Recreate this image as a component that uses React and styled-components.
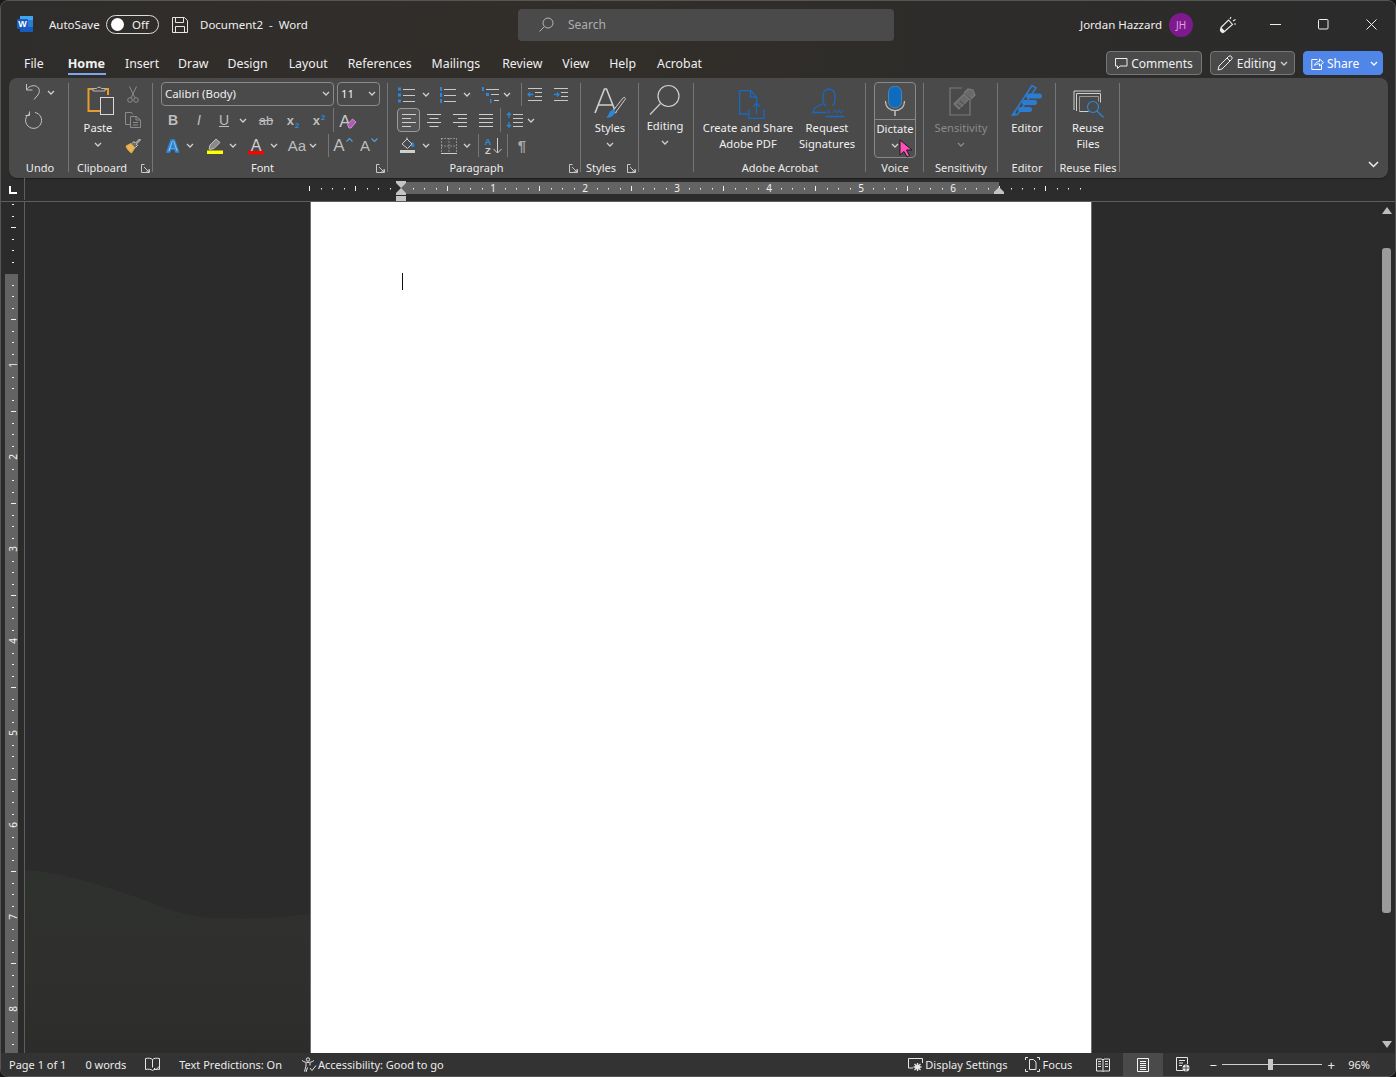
import React from "react";
import styled, { createGlobalStyle } from "styled-components";

const GlobalStyle = createGlobalStyle`
  html, body {
    margin: 0;
    padding: 0;
    background: #191919;
    overflow: hidden;
  }
  * { box-sizing: border-box; }
`;

const FONT = `"Noto Sans", "Open Sans", Arial, sans-serif`;

/* ---------- icons ---------- */
const Ico = ({ w = 16, h = 16, color = "#c9c9c9", sw = 1, children }) => (
  <svg width={w} height={h} viewBox={`0 0 ${w} ${h}`} fill="none" stroke={color} strokeWidth={sw}>
    {children}
  </svg>
);

const Chev = ({ color = "#d0d0d0" }) => (
  <svg width="8" height="5" viewBox="0 0 8 5" fill="none" stroke={color} strokeWidth="1.3">
    <path d="M1 1l3 3 3-3" />
  </svg>
);

const Launcher = () => (
  <Ico w={9} h={9} color="#c8c8c8">
    <path d="M3.5 .5H.5v8h8V5.5M3 3l5 5M8 5v3H5" />
  </Ico>
);

const WordLogo = () => (
  <svg width="17" height="17" viewBox="0 0 17 17">
    <rect x="3" y="0" width="13" height="16" rx="1" fill="#2b7cd3" />
    <rect x="3" y="0" width="13" height="4" fill="#41a5ee" />
    <rect x="3" y="11" width="13" height="5" fill="#185abd" />
    <rect x="0" y="3" width="11" height="10" rx="1" fill="#1a5cc0" />
    <text x="5.5" y="11" fontFamily="Liberation Sans" fontSize="9" fontWeight="700" fill="#fff" textAnchor="middle">W</text>
  </svg>
);

const SaveIcon = () => (
  <Ico w={16} h={16} color="#e6e6e6">
    <path d="M.5.5h12l3 3v12H.5zM3.5.5v5h8v-5M3.5 15.5v-6h9v6" />
  </Ico>
);

const SearchGlass = () => (
  <Ico w={15} h={15} color="#b4b4b4">
    <circle cx="9" cy="6" r="5" />
    <path d="M5.5 9.5L.5 14.5" />
  </Ico>
);

const Coauthor = () => (
  <svg width="18" height="18" viewBox="0 0 18 18" fill="none" stroke="#ededed" strokeWidth="1.1">
    <path d="M2 11.5L9.5 4l4 4.5L6 15l-2.5 1.5-2-2z" />
    <path d="M2.500 12.500l3 3L3.500 16.500l-2-2z" fill="#ededed" />
    <path d="M11 3l1-2M14 5l2.5-1.5M15 8h2" />
  </svg>
);

const Bubble = () => (
  <Ico w={13} h={13} color="#eee">
    <path d="M.5 1.5h11.5v7.5H5L2.5 11.5V9H.5z" />
  </Ico>
);

const PencilIcon = () => (
  <Ico w={16} h={16} color="#eee">
    <path d="M1 15l1-4L11.5 1.5a2 2 0 0 1 3 3L5 14zM10 3l3 3" />
  </Ico>
);

const ShareIcon = () => (
  <Ico w={13} h={13} color="#fff">
    <path d="M6.5 2.5H.8v10h9.7V8M3.5 8.5C4 5.5 6.5 4.5 8.5 4.5V2l4 3.5-4 3.5V6.8c-2 0-3.8.4-5 1.7z" />
  </Ico>
);

const UndoIcon = () => (
  <Ico w={16} h={18} color="#c4c4c4">
    <path d="M1.5 1v6h6M1.5 7C4 2.5 9.5 1.5 12.5 4c3 2.800 2 6.500-.5 9l-3 3.500" />
  </Ico>
);

const RedoIcon = () => (
  <Ico w={18} h={18} color="#c4c4c4">
    <path d="M5.500 2.500A8 8 0 1 0 11 1.500M5.500 .5v4H1.500" />
  </Ico>
);

const PasteIcon = () => (
  <svg width="28" height="32" viewBox="0 0 28 32" fill="none">
    <path d="M13 4H1.500v22H13" stroke="#e89c2f" strokeWidth="2" />
    <path d="M14 4h7v6" stroke="#e89c2f" strokeWidth="2" />
    <path d="M6 6V3.500h3.500a3 3 0 0 1 5 0H18V6z" stroke="#b9b9b9" fill="#4a4a4a" />
    <rect x="13.500" y="12.500" width="13" height="17" stroke="#d8d8d8" fill="#4a4a4a" />
  </svg>
);

const CutIcon = () => (
  <Ico w={12} h={17} color="#8c8c8c">
    <circle cx="3" cy="14" r="2.300" />
    <circle cx="9" cy="14" r="2.300" />
    <path d="M4 12L9.500.5M8 12L2.500.5" />
  </Ico>
);

const CopyIcon = () => (
  <Ico w={16} h={16} color="#8c8c8c">
    <path d="M5.500 12.500H.5v-12h6l1.500 2M5.500 4.500h6l4 3.500v7.500H5.500zM11 4.500V8h4.500M8 10.500h5M8 13h5" />
  </Ico>
);

const PainterIcon = () => (
  <svg width="16" height="16" viewBox="0 0 16 16" fill="none">
    <path d="M1 8l5-2.500 4 4L6.500 15C4 13.500 2 11 1 8z" fill="#e6b45c" stroke="#e8a93a" />
    <path d="M7 5.500l2 -2 1.500 1.500 4-4 1 1-4 4 1 1.500-2 2" stroke="#cfcfcf" fill="#6d6d6d" />
  </svg>
);

const LetterA = ({ color = "#bdbdbd", size = 16, weight = 400, children }) => (
  <ToolLetter $color={color} $size={size} $weight={weight}>{children || "A"}</ToolLetter>
);

const SizeCaret = ({ down }) => (
  <CaretMark width="7" height="4" viewBox="0 0 7 4" fill="none" stroke="#4a9fe0" strokeWidth="1.200">
    <path d={down ? "M.5 .5l3 3 3-3" : "M.5 3.500l3-3 3 3"} />
  </CaretMark>
);

const TextEffects = () => (
  <svg width="18" height="20" viewBox="0 0 18 20">
    <text x="9" y="16" textAnchor="middle" fontFamily="Liberation Sans" fontSize="17" fontWeight="700" fill="#e2edf6" stroke="#2b88d8" strokeWidth="1.500">A</text>
  </svg>
);

const Marker = () => (
  <svg width="16" height="16" viewBox="0 0 16 16" fill="none">
    <path d="M2 11l1-4 6-6 4 3.500-6 6-4 1z" fill="#8a8a8a" stroke="#bdbdbd" />
    <rect x="0" y="12.500" width="16" height="3.500" fill="#ffff00" />
  </svg>
);

const FontColorA = () => (
  <svg width="16" height="20" viewBox="0 0 16 20">
    <text x="8" y="14.500" textAnchor="middle" fontFamily="Liberation Sans" fontSize="16" fill="#cfcfcf">A</text>
    <rect x="0" y="15" width="16" height="3.500" fill="#ff0000" />
  </svg>
);

const ClearFormat = () => (
  <svg width="20" height="20" viewBox="0 0 20 20" fill="none">
    <text x="7" y="16.500" textAnchor="middle" fontFamily="Liberation Sans" fontSize="17" fill="#c8c8c8">A</text>
    <path d="M9.500 14.500l5-5.500 3.500 3-5 6h-2z" stroke="#d88ad8" fill="#a85fb0" />
  </svg>
);

const ListBars = ({ kind }) => {
  const marks = [2, 8, 14];
  return (
    <svg width="18" height="16" viewBox="0 0 18 16" fill="none">
      {marks.map((y) => (
        <g key={y}>
          {kind === "bullet" && <rect x="0" y={y - 1.500} width="3" height="3" fill="#2b88d8" />}
          {kind === "number" && <rect x="1" y={y - 2} width="2" height="4" fill="#2b88d8" />}
          <path d={`M5 ${y + 0.500}h12`} stroke="#c8c8c8" />
        </g>
      ))}
    </svg>
  );
};

const Multilevel = () => (
  <svg width="18" height="16" viewBox="0 0 18 16" fill="none">
    <rect x="0" y="0" width="2" height="4" fill="#2b88d8" />
    <rect x="4" y="6" width="3" height="3" fill="#2b88d8" />
    <rect x="8" y="12" width="1.500" height="4" fill="#2b88d8" />
    <path d="M4 2.500h13M9 7.500h8M12 13.500h5" stroke="#c8c8c8" />
  </svg>
);

const IndentIcon = ({ flip }) => (
  <svg width="16" height="14" viewBox="0 0 16 14" fill="none">
    <path d="M1 .5h14M8 4.500h7M8 8.500h7M1 12.500h14" stroke="#c8c8c8" />
    <path d={flip ? "M1 6.500h5M4 4.500l2 2-2 2" : "M6 6.500H1M3 4.500l-2 2 2 2"} stroke="#2b88d8" strokeWidth="1.300" />
  </svg>
);

const AlignIcon = ({ mode }) => {
  const rows = {
    left: ["M1 1.500h14", "M1 5.500h9", "M1 9.500h14", "M1 13.500h9"],
    center: ["M1 1.500h14", "M3.500 5.500h9", "M1 9.500h14", "M3.500 13.500h9"],
    right: ["M1 1.500h14", "M6 5.500h9", "M1 9.500h14", "M6 13.500h9"],
    justify: ["M1 1.500h14", "M1 5.500h14", "M1 9.500h14", "M1 13.500h14"],
  };
  return (
    <svg width="16" height="15" viewBox="0 0 16 15" fill="none" stroke="#cfcfcf">
      <path d={rows[mode].join("")} />
    </svg>
  );
};

const LineSpacing = () => (
  <svg width="18" height="16" viewBox="0 0 18 16" fill="none">
    <path d="M7 2.500h10M7 6.500h10M7 10.500h10M7 14.500h10" stroke="#c8c8c8" />
    <path d="M3 1v5M1 3l2-2 2 2M3 10v5M1 13l2 2 2-2" stroke="#2b88d8" strokeWidth="1.300" />
  </svg>
);

const Shading = () => (
  <svg width="16" height="17" viewBox="0 0 16 17" fill="none">
    <path d="M2 7l5-5 5 5-4.500 4.500z" stroke="#d0d0d0" />
    <path d="M7 2V.5" stroke="#d0d0d0" />
    <path d="M12.500 5c1 1.500 1.500 2.500 1.500 3.500a1 1 0 0 1-2.500 0" fill="#2b88d8" stroke="#2b88d8" />
    <rect x="0" y="13" width="15" height="3" fill="#cfcfcf" />
  </svg>
);

const Borders = () => (
  <svg width="16" height="16" viewBox="0 0 16 16" fill="none" stroke="#cfcfcf" strokeDasharray="1 2">
    <path d="M.5 .5h15M.5 .5v15M15.500 .5v15M8 .5v15M.5 8h15" />
    <path d="M0 15.500h16" strokeDasharray="none" />
  </svg>
);

const SortIcon = () => (
  <svg width="20" height="20" viewBox="0 0 20 20" fill="none">
    <text x="5" y="9" textAnchor="middle" fontFamily="Liberation Sans" fontSize="9.500" fontWeight="700" fill="#2b88d8">A</text>
    <text x="5" y="18" textAnchor="middle" fontFamily="Liberation Sans" fontSize="9.500" fontWeight="700" fill="#cfcfcf">Z</text>
    <path d="M14.500 2v15M10.500 13l4 4 4-4" stroke="#cfcfcf" />
  </svg>
);

const StylesIcon = () => (
  <svg width="32" height="30" viewBox="0 0 32 30" fill="none">
    <path d="M1 25L10.500 1h2L22 25M4.500 17h14" stroke="#cfcfcf" strokeWidth="1.600" />
    <path d="M18 24l11-14c1.500-1.500 3 0 2 1.500L22 24" stroke="#cfcfcf" fill="#4a4a4a" />
    <path d="M12 29.500c3 .5 6-.5 7.500-2.500 1.500-1.500 2.500-3 1.500-4.500-1.500-1-4-.5-5 1-1 1.500-1 4-4 6z" fill="#2b88d8" />
  </svg>
);

const BigGlass = () => (
  <Ico w={32} h={32} color="#cfcfcf" sw={1.200}>
    <circle cx="19.500" cy="12" r="10.500" />
    <path d="M11.500 19.500L1 30.500" />
  </Ico>
);

const AdobeIcon = () => (
  <svg width="26" height="29" viewBox="0 0 26 29" fill="none" stroke="#1968c2" strokeWidth="1.300">
    <path d="M9 24H.7V.7h11l6 6.500v5M11.500.7v6.500h6.500" />
    <path d="M10 19v9.300h15V19M17.500 24V13M14 16.500l3.500-3.500 3.500 3.500" />
  </svg>
);

const SignIcon = () => (
  <svg width="32" height="30" viewBox="0 0 32 30" fill="none" stroke="#1968c2" strokeWidth="1.300">
    <path d="M14 18c-1.500-1-3-3-3-5.500V7a6 6 0 0 1 12 0v5.500c0 2.500-1 4-2.500 5" />
    <path d="M10.500 16C5 18 1 20 1 24.500h13" />
    <path d="M15 22l3 3M18 22l-3 3M21 25l2-3 2 3 2-3 2 3 2-3" strokeWidth="1" />
    <path d="M14 28.500h18" />
  </svg>
);

const MicIcon = () => (
  <svg width="22" height="30" viewBox="0 0 22 30" fill="none">
    <rect x="4.500" y="0" width="13" height="22" rx="6.500" fill="#0f6cbd" stroke="#5e9fd8" strokeWidth=".6" />
    <path d="M1.500 15c0 6 4 9.500 9.500 9.500s9.500-3.500 9.500-9.500" stroke="#bdbdbd" strokeWidth="1.200" />
    <path d="M11 24.500V30" stroke="#bdbdbd" strokeWidth="1.600" />
  </svg>
);

const PinkCursor = () => (
  <svg width="14" height="19" viewBox="0 0 14 19">
    <path d="M1 1v15l4-3.500 3 5.500 2.500-1.500-3-5.500H13z" fill="#ff4fb8" stroke="#1d1d1d" strokeWidth="1" />
  </svg>
);

const SensitivityIcon = () => (
  <svg width="28" height="30" viewBox="0 0 28 30" fill="none" stroke="#7a7a7a">
    <path d="M13 2H1v27h20V13" strokeWidth="1.200" />
    <path d="M5 18L15 8l5 5-10 10zM15 7l4-4 5 1 2 5-4 4" fill="#6a6a6a" strokeWidth="1.200" />
    <path d="M8 18l6 5M11 15l6 5" stroke="#4a4a4a" />
  </svg>
);

const EditorIcon = () => (
  <svg width="32" height="33" viewBox="0 0 32 33" fill="none">
    <path d="M1.500 31L21 1.500l4 2.500L6.500 30.500z" stroke="#2b7cd3" strokeWidth="1.500" />
    <path d="M1 32l5-1.500L3 27z" fill="#2b7cd3" />
    <rect x="15" y="9.500" width="16" height="5" rx="2.500" fill="#2b7cd3" />
    <rect x="11" y="16" width="15" height="5" rx="2.500" fill="#2b7cd3" />
    <rect x="7" y="23" width="14" height="5" rx="2.500" fill="#2b7cd3" />
  </svg>
);

const ReuseIcon = () => (
  <svg width="32" height="28" viewBox="0 0 32 28" fill="none">
    <path d="M1 20V1h27" stroke="#cfcfcf" />
    <path d="M3.500 21V3.500h24v9" stroke="#cfcfcf" />
    <path d="M6.500 21.500V6.500h19v5" stroke="#9a9a9a" />
    <path d="M6.500 21.500h9" stroke="#cfcfcf" />
    <circle cx="20" cy="17" r="5.500" stroke="#2b88d8" strokeWidth="1.200" />
    <path d="M24 21l6.500 6.500" stroke="#2b88d8" strokeWidth="1.300" />
  </svg>
);

const BookCheck = () => (
  <Ico w={15} h={15} color="#e6e6e6">
    <path d="M7.500 2.500C6 1 3 1 .5 1.500v11C3 12 6 12 7.500 13.500 9 12 12 12 14.500 12.500v-11C12 1 9 1 7.500 2.500zM7.500 2.500v8M9 11l2 2 3-3.500" />
  </Ico>
);

const AccessIcon = () => (
  <Ico w={16} h={16} color="#e6e6e6">
    <circle cx="7" cy="2.500" r="1.700" />
    <path d="M1 3.500C3 5 5 5.500 7 5.500s4-.5 6-2M5 6v3L3.500 14.500M9 6v2.500M6.500 10.500L5 15M9 11l2 2.500 4-5" />
  </Ico>
);

const DisplayIcon = () => (
  <Ico w={15} h={14} color="#e6e6e6">
    <path d="M5 10H.5V.5h14V5" />
    <circle cx="9.500" cy="9" r="2" fill="#e6e6e6" />
    <path d="M9.500 5v8M5.500 9h8M6.500 6l6 6M12.500 6l-6 6" strokeWidth="1.300" />
  </Ico>
);

const FocusIcon = () => (
  <Ico w={15} h={15} color="#e6e6e6">
    <path d="M.5 3V.5H3M12 .5h2.500V3M14.500 12v2.500H12M3 14.500H.5V12" />
    <path d="M4.500 12.500V2.500H8.500l2.500 2.500v7.500z" />
  </Ico>
);

const ReadIcon = () => (
  <Ico w={14} h={14} color="#e6e6e6">
    <path d="M.5 1h5.500l1 1 1-1h5.500v12H8l-1 .5L6 13H.5zM7 2v11M2 3.500h3M2 6h3M2 8.500h3M9 3.500h3M9 6h3M9 8.500h3" />
  </Ico>
);

const PrintIcon = () => (
  <Ico w={12} h={14} color="#f4f4f4">
    <path d="M.5 .5h11v13H.5zM3 3.500h6M3 5.500h6M3 7.500h6M3 9.500h6M3 11.500h6" />
  </Ico>
);

const WebIcon = () => (
  <svg width="14" height="15" viewBox="0 0 14 15" fill="none" stroke="#e6e6e6">
    <path d="M7 13.500H.5V.5h11V7M3 3.500h6M3 6h4M3 8.500h3" />
    <circle cx="10" cy="11" r="3.500" fill="#e6e6e6" stroke="none" />
    <path d="M6.500 11h7M10 7.500v7" stroke="#333" strokeWidth=".8" />
  </svg>
);

/* ---------- rulers ---------- */
const HRuler = () => {
  const ticks = [];
  for (let i = 0; i <= 67; i++) {
    const x = 309 + i * 11.5;
    if (x > 1082) break;
    const rem = i % 8;
    if (rem === 0 && x > 320 && x < 1000) continue;
    if (rem === 0 || rem === 4) {
      ticks.push(<rect key={i} x={Math.round(x)} y={186} width={1} height={5} fill="#f2f2f2" />);
    } else {
      ticks.push(<rect key={i} x={Math.round(x)} y={188} width={1} height={1.500} fill="#f2f2f2" />);
    }
  }
  return (
    <svg width="1370" height="23" viewBox="25 178 1370 23">
      <rect x="401" y="182" width="598" height="12" fill="#636363" />
      {ticks}
      {[1, 2, 3, 4, 5, 6].map((n) => (
        <text key={n} x={401 + n * 92} y={192} textAnchor="middle" fontFamily="Noto Sans" fontSize="10" fill="#f2f2f2">{n}</text>
      ))}
      <path d="M396 181h10v2l-5 5-5-5zM396 195v-2l5-5 5 5v2z" fill="#c4c4c4" />
      <rect x="396" y="196" width="10" height="5" fill="#c4c4c4" />
      <path d="M994 194v-2l5-5 5 5v2z" fill="#c4c4c4" />
    </svg>
  );
};

const VRuler = () => {
  const ticks = [];
  for (let i = -6; i <= 68; i++) {
    const y = 273 + i * 11.5;
    if (y > 1050) break;
    const rem = ((i % 8) + 8) % 8;
    if (rem === 0) continue;
    if (rem === 4) ticks.push(<rect key={i} x={11} y={Math.round(y)} width={5} height={1} fill="#f2f2f2" />);
    else ticks.push(<rect key={i} x={12} y={Math.round(y)} width={2} height={1} fill="#f2f2f2" />);
  }
  return (
    <svg width="23" height="851" viewBox="1 202 23 851">
      <rect x="5" y="274" width="13" height="779" fill="#636363" />
      {ticks}
      {[1, 2, 3, 4, 5, 6, 7, 8].map((n) => (
        <text
          key={n}
          x={0}
          y={0}
          transform={`translate(16.500 ${273 + n * 92}) rotate(-90)`}
          textAnchor="middle"
          fontFamily="Noto Sans"
          fontSize="10"
          fill="#f2f2f2"
        >
          {n}
        </text>
      ))}
    </svg>
  );
};

/* ---------- layout ---------- */
const Window = styled.div`
  width: 1396px;
  height: 1077px;
  display: flex;
  flex-direction: column;
  border: 1px solid #555;
  border-radius: 8px;
  overflow: hidden;
  background: #2b2b2b;
  font-family: ${FONT};
  color: #f0f0f0;
`;

const Header = styled.div`
  background: linear-gradient(90deg, #2f2d2b 0%, #322e2a 45%, #2d2c2a 70%, #2b2b2b 100%);
`;

const TitleBar = styled.div`
  height: 47px;
  display: flex;
  align-items: center;
  font-size: 11.5px;
`;

const TitleLeft = styled.div`
  width: 517px;
  display: flex;
  align-items: center;
  padding-left: 16px;
`;

const AutoSave = styled.span`
  margin-left: 15px;
  width: 57px;
`;

const Toggle = styled.div`
  width: 53px;
  height: 19px;
  border: 1px solid #dcdcdc;
  border-radius: 10px;
  display: flex;
  align-items: center;
  padding-left: 4px;
  gap: 8px;
  font-size: 11.5px;
  &::before {
    content: "";
    width: 13px;
    height: 13px;
    border-radius: 50%;
    background: #fff;
  }
`;

const SaveSlot = styled.span`
  margin-left: 13px;
  display: flex;
`;

const DocTitle = styled.span`
  margin-left: 12px;
  white-space: pre;
`;

const SearchBox = styled.div`
  width: 376px;
  height: 32px;
  background: #4a4a4a;
  border-radius: 4px;
  display: flex;
  align-items: center;
  padding-left: 21px;
  gap: 14px;
  color: #aeaeae;
  font-size: 12px;
`;

const TitleRight = styled.div`
  flex: 1;
  display: flex;
  align-items: center;
  padding-left: 186px;
`;

const UserName = styled.span`
  width: 89px;
`;

const Avatar = styled.div`
  width: 24px;
  height: 24px;
  border-radius: 50%;
  background: #7e1a8e;
  color: #d9a6df;
  font-size: 10px;
  display: flex;
  align-items: center;
  justify-content: center;
`;

const WinButton = styled.span`
  width: 48px;
  display: flex;
  justify-content: center;
`;

const MinimizeButton = styled(WinButton)`
  margin-left: 14px;
`;

const CoauthorSlot = styled.span`
  margin-left: 26px;
  display: flex;
`;

const TabBar = styled.div`
  height: 30px;
  display: flex;
  align-items: center;
  padding: 0 12px 0 23px;
  font-size: 12.3px;
`;

const Tab = styled.span`
  margin-right: ${(p) => p.$mr || 20}px;
  position: relative;
  font-weight: ${(p) => (p.$active ? 700 : 400)};
  font-size: ${(p) => (p.$active ? "12.6px" : "inherit")};
  ${(p) =>
    p.$active &&
    `
    &::after {
      content: "";
      position: absolute;
      left: 0;
      right: -1px;
      bottom: -3px;
      height: 2px;
      background: #7aa7ee;
    }
  `}
`;

const HeaderActions = styled.div`
  margin-left: auto;
  display: flex;
  gap: 8px;
`;

const ActionButton = styled.div`
  width: ${(p) => p.$w}px;
  height: 24px;
  display: flex;
  align-items: center;
  justify-content: center;
  gap: ${(p) => p.$gap || 5}px;
  border-radius: 4px;
  border: 1px solid #777;
  background: #4a4a4a;
  font-size: 12px;
`;

const ShareButton = styled(ActionButton)`
  background: #4f86e8;
  border-color: #4f86e8;
  color: #fff;
  justify-content: flex-start;
  padding-left: 7px;
  position: relative;
  svg:last-child {
    position: absolute;
    right: 4px;
    top: 9px;
  }
`;

const Ribbon = styled.div`
  margin: 0 7px 0 8px;
  height: 100px;
  background: #4a4a4a;
  border-radius: 8px;
  display: flex;
  position: relative;
  font-size: 11.2px;
  box-shadow: 0 1px 1px #1f1f1f;
`;

const Group = styled.div`
  width: ${(p) => p.$w}px;
  position: relative;
  display: flex;
  flex-direction: column;
  padding-top: 4px;
  &::after {
    content: "";
    position: absolute;
    right: 0;
    top: 5px;
    bottom: 6px;
    width: 1px;
    background: #767676;
  }
`;

const GroupBody = styled.div`
  height: 76px;
  display: flex;
  flex-direction: ${(p) => (p.$col ? "column" : "row")};
  justify-content: ${(p) => p.$justify || "flex-start"};
  padding-left: ${(p) => p.$pl || 0}px;
`;

const GroupLabel = styled.div`
  height: 20px;
  line-height: 20px;
  text-align: center;
  padding-left: ${(p) => p.$pl || 0}px;
  padding-right: ${(p) => p.$pr || 0}px;
  font-size: 11px;
  color: #ececec;
  white-space: nowrap;
`;

const LauncherSlot = styled.span`
  position: absolute;
  right: 3px;
  bottom: 5px;
  display: flex;
`;

const Row = styled.div`
  display: flex;
  align-items: center;
  height: ${(p) => p.$h || 25}px;
`;

const Tool = styled.span`
  width: ${(p) => p.$w}px;
  margin-left: ${(p) => p.$ml || 0}px;
  height: 100%;
  flex: none;
  display: flex;
  align-items: center;
  justify-content: center;
  position: relative;
  svg {
    flex: none;
  }
  ${(p) =>
    p.$sep &&
    `
    &::before {
      content: "";
      position: absolute;
      left: 0;
      top: 1px;
      bottom: 1px;
      width: 1px;
      background: #767676;
    }
  `}
`;

const ActiveTool = styled(Tool)`
  height: 24px;
  border: 1px solid #9a9a9a;
  border-radius: 4px;
  background: #555;
`;

const ToolLetter = styled.span`
  font-family: "Liberation Sans", Arial, sans-serif;
  font-size: ${(p) => p.$size}px;
  font-weight: ${(p) => p.$weight};
  color: ${(p) => p.$color};
  line-height: 1;
  white-space: nowrap;
`;

const Sup = styled.span`
  font-size: 8px;
  font-weight: 700;
  color: #2b88d8;
  position: relative;
  top: ${(p) => p.$top}px;
  margin-left: 1px;
`;

const CaretMark = styled.svg`
  align-self: flex-start;
  margin: 5px 0 0 1px;
`;

const Select = styled.div`
  align-self: flex-start;
  height: 24px;
  width: ${(p) => p.$w}px;
  margin-left: ${(p) => p.$ml || 0}px;
  border: 1px solid #8a8a8a;
  border-radius: 4px;
  display: flex;
  align-items: center;
  justify-content: space-between;
  padding: 0 3px 2px;
  font-size: 11.4px;
`;

const BigTool = styled.div`
  width: ${(p) => p.$w}px;
  display: flex;
  flex-direction: column;
  align-items: center;
  text-align: center;
  line-height: 16px;
  color: ${(p) => (p.$muted ? "#8a8a8a" : "#f0f0f0")};
`;

const BigIcon = styled.div`
  height: ${(p) => p.$h || 38}px;
  padding-left: ${(p) => p.$dx || 0}px;
  padding-bottom: ${(p) => p.$pb || 0}px;
  display: flex;
  align-items: ${(p) => (p.$pb !== undefined ? "flex-end" : "center")};
  justify-content: center;
  flex: none;
`;

const ChevRow = styled.div`
  height: 16px;
  display: flex;
  align-items: center;
  justify-content: center;
`;

const DictateButton = styled.div`
  width: 42px;
  height: 76px;
  margin-left: 8px;
  border: 1px solid #8a8a8a;
  border-radius: 4px;
  background: #4f4f4f;
  display: flex;
  flex-direction: column;
  align-items: center;
  position: relative;
  line-height: 16px;
  flex: none;
`;

const DictateTop = styled.div`
  height: 37px;
  width: 100%;
  display: flex;
  justify-content: center;
  padding-top: 3px;
  margin-bottom: 1px;
  border-bottom: 1px solid #8a8a8a;
  flex: none;
`;

const CursorSlot = styled.span`
  position: absolute;
  left: 24px;
  top: 56px;
  display: flex;
`;

const CollapseSlot = styled.span`
  position: absolute;
  right: 9px;
  bottom: 10px;
  display: flex;
`;

const RulerRow = styled.div`
  height: 24px;
  flex: none;
  display: flex;
  background: #2c2c2c;
  border-bottom: 1px solid #5e5e5e;
`;

const RulerCorner = styled.div`
  width: 24px;
  height: 22px;
  flex: none;
  border-right: 1px solid #5e5e5e;
  position: relative;
  &::before {
    content: "";
    position: absolute;
    left: 8px;
    top: 8px;
    width: 6px;
    height: 6px;
    border-left: 2px solid #fff;
    border-bottom: 2px solid #fff;
  }
`;

const Main = styled.div`
  flex: 1;
  display: flex;
  min-height: 0;
`;

const VRulerSlot = styled.div`
  width: 24px;
  flex: none;
  border-right: 1px solid #5e5e5e;
  background: #2b2b2b;
`;

const Canvas = styled.div`
  flex: 1;
  display: flex;
  justify-content: center;
  padding-right: 2px;
  position: relative;
  background: #2b2b2b;
`;

const Wave = styled.svg`
  position: absolute;
  left: 0;
  top: 660px;
`;

const Page = styled.div`
  width: 782px;
  height: 100%;
  background: #fff;
  border-left: 1px solid #6e6e6e;
  border-right: 1px solid #6e6e6e;
  padding: 71px 0 0 91px;
  position: relative;
`;

const Caret = styled.div`
  width: 1px;
  height: 17px;
  background: #111;
`;

const ScrollBar = styled.div`
  width: 17px;
  flex: none;
  display: flex;
  flex-direction: column;
  align-items: center;
  background: #2a2a2a;
`;

const ScrollArrow = styled.div`
  height: 17px;
  flex: none;
  display: flex;
  align-items: center;
  justify-content: center;
`;

const Thumb = styled.div`
  width: 9px;
  height: 665px;
  margin-top: 29px;
  border-radius: 3px;
  background: #9b9b9b;
`;

const ScrollSpace = styled.div`
  flex: 1;
`;

const StatusBar = styled.div`
  height: 23px;
  flex: none;
  display: flex;
  align-items: center;
  background: #333;
  font-size: 11px;
  color: #ececec;
  padding-left: 8px;
`;

const StatusItem = styled.span`
  display: flex;
  align-items: center;
  gap: ${(p) => p.$gap || 3}px;
  margin-right: ${(p) => p.$mr}px;
  white-space: nowrap;
`;

const StatusRight = styled.div`
  margin-left: auto;
  display: flex;
  align-items: center;
  height: 100%;
`;

const ViewButton = styled.span`
  width: 40px;
  height: 100%;
  display: flex;
  align-items: center;
  justify-content: center;
  background: ${(p) => (p.$on ? "#4a4a4a" : "transparent")};
`;

const ZoomTrack = styled.div`
  width: 100px;
  height: 1px;
  background: #cfcfcf;
  margin: 0 3px;
  position: relative;
  &::after {
    content: "";
    position: absolute;
    left: 46px;
    top: -5px;
    width: 5px;
    height: 11px;
    background: #c8c8c8;
  }
`;

const ZoomSign = styled.span`
  font-size: 13px;
  width: 12px;
  text-align: center;
`;

const ZoomMinus = styled(ZoomSign)`
  margin-left: 4px;
`;

const ZoomValue = styled.span`
  margin: 0 25px 0 11px;
`;

export default function App() {
  return (
    <>
      <GlobalStyle />
      <Window>
        <Header>
          <TitleBar>
            <TitleLeft>
              <WordLogo />
              <AutoSave>AutoSave</AutoSave>
              <Toggle>Off</Toggle>
              <SaveSlot><SaveIcon /></SaveSlot>
              <DocTitle>Document2  -  Word</DocTitle>
            </TitleLeft>
            <SearchBox>
              <SearchGlass />
              Search
            </SearchBox>
            <TitleRight>
              <UserName>Jordan Hazzard</UserName>
              <Avatar>JH</Avatar>
              <CoauthorSlot><Coauthor /></CoauthorSlot>
              <MinimizeButton>
                <Ico w={11} h={11} color="#eee"><path d="M0 5.500h11" /></Ico>
              </MinimizeButton>
              <WinButton>
                <Ico w={11} h={11} color="#eee"><rect x=".5" y=".5" width="9.500" height="9.500" rx="1" /></Ico>
              </WinButton>
              <WinButton>
                <Ico w={11} h={11} color="#eee"><path d="M.5 .5l10 10M10.500 .5l-10 10" /></Ico>
              </WinButton>
            </TitleRight>
          </TitleBar>
          <TabBar>
            <Tab $mr={24}>File</Tab>
            <Tab $active>Home</Tab>
            <Tab $mr={19}>Insert</Tab>
            <Tab $mr={19}>Draw</Tab>
            <Tab $mr={21}>Design</Tab>
            <Tab>Layout</Tab>
            <Tab>References</Tab>
            <Tab $mr={22}>Mailings</Tab>
            <Tab>Review</Tab>
            <Tab>View</Tab>
            <Tab $mr={21}>Help</Tab>
            <Tab>Acrobat</Tab>
            <HeaderActions>
              <ActionButton $w={96} $gap={3}><Bubble />Comments</ActionButton>
              <ActionButton $w={85} $gap={4}><PencilIcon />Editing<Chev /></ActionButton>
              <ShareButton $w={80} $gap={3}><ShareIcon />Share<Chev color="#fff" /></ShareButton>
            </HeaderActions>
          </TabBar>
          <Ribbon>
            <Group $w={60}>
              <GroupBody $col $pl={14}>
                <Row $h={20}>
                  <Tool $w={20}><UndoIcon /></Tool>
                  <Tool $w={16}><Chev /></Tool>
                </Row>
                <Row $h={35}>
                  <Tool $w={20}><RedoIcon /></Tool>
                </Row>
              </GroupBody>
              <GroupLabel $pl={2}>Undo</GroupLabel>
            </Group>

            <Group $w={84}>
              <GroupBody $pl={10}>
                <BigTool $w={38}>
                  <BigIcon $h={38} $dx={5}><PasteIcon /></BigIcon>
                  Paste
                  <ChevRow><Chev /></ChevRow>
                </BigTool>
                <GroupBody $col>
                  <Row $h={25}><Tool $w={32}><CutIcon /></Tool></Row>
                  <Row $h={26}><Tool $w={32}><CopyIcon /></Tool></Row>
                  <Row $h={25}><Tool $w={32}><PainterIcon /></Tool></Row>
                </GroupBody>
              </GroupBody>
              <GroupLabel $pr={18}>Clipboard</GroupLabel>
              <LauncherSlot><Launcher /></LauncherSlot>
            </Group>

            <Group $w={235}>
              <GroupBody $col $pl={8}>
                <Row $h={25}>
                  <Select $w={173}>Calibri (Body)<Chev /></Select>
                  <Select $w={43} $ml={3}>11<Chev /></Select>
                </Row>
                <Row $h={26}>
                  <Tool $w={24}><LetterA size={14} weight={700}>B</LetterA></Tool>
                  <Tool $w={28}><LetterA size={14}><i>I</i></LetterA></Tool>
                  <Tool $w={22}><LetterA size={14}><u>U</u></LetterA></Tool>
                  <Tool $w={16}><Chev /></Tool>
                  <Tool $w={30}><LetterA size={13}><s>ab</s></LetterA></Tool>
                  <Tool $w={24}><LetterA size={13} weight={700}>x<Sup $top={3}>2</Sup></LetterA></Tool>
                  <Tool $w={28}><LetterA size={13} weight={700}>x<Sup $top={-5}>2</Sup></LetterA></Tool>
                  <Tool $w={30} $sep><ClearFormat /></Tool>
                </Row>
                <Row $h={25}>
                  <Tool $w={24}><TextEffects /></Tool>
                  <Tool $w={10}><Chev /></Tool>
                  <Tool $w={28} $ml={6}><Marker /></Tool>
                  <Tool $w={8}><Chev /></Tool>
                  <Tool $w={28} $ml={5}><FontColorA /></Tool>
                  <Tool $w={8}><Chev /></Tool>
                  <Tool $w={24} $ml={7}><LetterA size={15}>Aa</LetterA></Tool>
                  <Tool $w={8}><Chev /></Tool>
                  <Tool $w={30} $ml={11} $sep><LetterA size={17}>A</LetterA><SizeCaret /></Tool>
                  <Tool $w={22}><LetterA size={15}>A</LetterA><SizeCaret down /></Tool>
                </Row>
              </GroupBody>
              <GroupLabel $pr={16}>Font</GroupLabel>
              <LauncherSlot><Launcher /></LauncherSlot>
            </Group>

            <Group $w={193}>
              <GroupBody $col $pl={9}>
                <Row $h={25}>
                  <Tool $w={20}><ListBars kind="bullet" /></Tool>
                  <Tool $w={18}><Chev /></Tool>
                  <Tool $w={26}><ListBars kind="number" /></Tool>
                  <Tool $w={12}><Chev /></Tool>
                  <Tool $w={24} $ml={6}><Multilevel /></Tool>
                  <Tool $w={8}><Chev /></Tool>
                  <Tool $w={28} $ml={10} $sep><IndentIcon /></Tool>
                  <Tool $w={24}><IndentIcon flip /></Tool>
                </Row>
                <Row $h={26}>
                  <ActiveTool $w={23}><AlignIcon mode="left" /></ActiveTool>
                  <Tool $w={28}><AlignIcon mode="center" /></Tool>
                  <Tool $w={24}><AlignIcon mode="right" /></Tool>
                  <Tool $w={28}><AlignIcon mode="justify" /></Tool>
                  <Tool $w={30} $sep><LineSpacing /></Tool>
                  <Tool $w={8} $ml={-3}><Chev /></Tool>
                </Row>
                <Row $h={25}>
                  <Tool $w={22}><Shading /></Tool>
                  <Tool $w={14}><Chev /></Tool>
                  <Tool $w={32}><Borders /></Tool>
                  <Tool $w={8} $ml={-2}><Chev /></Tool>
                  <Tool $w={29} $ml={7} $sep><SortIcon /></Tool>
                  <Tool $w={30} $sep><LetterA size={15} weight={700} color="#a9a9a9">¶</LetterA></Tool>
                </Row>
              </GroupBody>
              <GroupLabel $pr={16}>Paragraph</GroupLabel>
              <LauncherSlot><Launcher /></LauncherSlot>
            </Group>

            <Group $w={58}>
              <GroupBody $justify="center">
                <BigTool $w={50}>
                  <BigIcon $pb={2}><StylesIcon /></BigIcon>
                  Styles
                  <ChevRow><Chev /></ChevRow>
                </BigTool>
              </GroupBody>
              <GroupLabel $pr={18}>Styles</GroupLabel>
              <LauncherSlot><Launcher /></LauncherSlot>
            </Group>

            <Group $w={55}>
              <GroupBody $pl={2}>
                <BigTool $w={48}>
                  <BigIcon $h={36}><BigGlass /></BigIcon>
                  Editing
                  <ChevRow><Chev /></ChevRow>
                </BigTool>
              </GroupBody>
              <GroupLabel>&nbsp;</GroupLabel>
            </Group>

            <Group $w={172}>
              <GroupBody $pl={6}>
                <BigTool $w={96}>
                  <BigIcon $pb={1} $dx={8}><AdobeIcon /></BigIcon>
                  Create and Share
                  <br />
                  Adobe PDF
                </BigTool>
                <BigTool $w={62}>
                  <BigIcon $pb={2} $dx={1}><SignIcon /></BigIcon>
                  Request Signatures
                </BigTool>
              </GroupBody>
              <GroupLabel>Adobe Acrobat</GroupLabel>
            </Group>

            <Group $w={58}>
              <DictateButton>
                <DictateTop><MicIcon /></DictateTop>
                Dictate
                <ChevRow><Chev /></ChevRow>
                <CursorSlot><PinkCursor /></CursorSlot>
              </DictateButton>
              <GroupLabel>Voice</GroupLabel>
            </Group>

            <Group $w={74}>
              <GroupBody $justify="center">
                <BigTool $w={66} $muted>
                  <BigIcon $dx={3} $pb={4}><SensitivityIcon /></BigIcon>
                  Sensitivity
                  <ChevRow><Chev color="#8a8a8a" /></ChevRow>
                </BigTool>
              </GroupBody>
              <GroupLabel>Sensitivity</GroupLabel>
            </Group>

            <Group $w={58}>
              <GroupBody $justify="center">
                <BigTool $w={50}>
                  <BigIcon $pb={3}><EditorIcon /></BigIcon>
                  Editor
                </BigTool>
              </GroupBody>
              <GroupLabel>Editor</GroupLabel>
            </Group>

            <Group $w={64}>
              <GroupBody $justify="center">
                <BigTool $w={50}>
                  <BigIcon $pb={2} $dx={1}><ReuseIcon /></BigIcon>
                  Reuse Files
                </BigTool>
              </GroupBody>
              <GroupLabel>Reuse Files</GroupLabel>
            </Group>

            <CollapseSlot>
              <Ico w={11} h={7} color="#f0f0f0" sw={1.500}><path d="M1 1l4.500 4.500L10 1" /></Ico>
            </CollapseSlot>
          </Ribbon>
        </Header>

        <RulerRow>
          <RulerCorner />
          <HRuler />
        </RulerRow>

        <Main>
          <VRulerSlot><VRuler /></VRulerSlot>
          <Canvas>
            <Wave width="285" height="191" viewBox="0 0 285 191">
              <defs>
                <linearGradient id="waveFade" x1="0" y1="0" x2="0" y2="1">
                  <stop offset="0" stopColor="#2f312e" />
                  <stop offset="0.6" stopColor="#2f302d" />
                  <stop offset="1" stopColor="#2c2c2b" />
                </linearGradient>
              </defs>
              <path d="M0 8C40 10 90 28 130 42 150 50 175 56 185 56 220 58 255 56 285 52V191H0z" fill="url(#waveFade)" />
            </Wave>
            <Page><Caret /></Page>
          </Canvas>
          <ScrollBar>
            <ScrollArrow>
              <svg width="10" height="7" viewBox="0 0 10 7"><path d="M5 0l5 7H0z" fill="#bdbdbd" /></svg>
            </ScrollArrow>
            <Thumb />
            <ScrollSpace />
            <ScrollArrow>
              <svg width="10" height="7" viewBox="0 0 10 7"><path d="M0 0h10L5 7z" fill="#bdbdbd" /></svg>
            </ScrollArrow>
          </ScrollBar>
        </Main>

        <StatusBar>
          <StatusItem $mr={19}>Page 1 of 1</StatusItem>
          <StatusItem $mr={19}>0 words</StatusItem>
          <StatusItem $mr={19}><BookCheck /></StatusItem>
          <StatusItem $mr={19}>Text Predictions: On</StatusItem>
          <StatusItem $mr={0} $gap={1}><AccessIcon />Accessibility: Good to go</StatusItem>
          <StatusRight>
            <StatusItem $mr={17} $gap={2}><DisplayIcon />Display Settings</StatusItem>
            <StatusItem $mr={11}><FocusIcon />Focus</StatusItem>
            <ViewButton><ReadIcon /></ViewButton>
            <ViewButton $on><PrintIcon /></ViewButton>
            <ViewButton><WebIcon /></ViewButton>
            <ZoomMinus>−</ZoomMinus>
            <ZoomTrack />
            <ZoomSign>+</ZoomSign>
            <ZoomValue>96%</ZoomValue>
          </StatusRight>
        </StatusBar>
      </Window>
    </>
  );
}
